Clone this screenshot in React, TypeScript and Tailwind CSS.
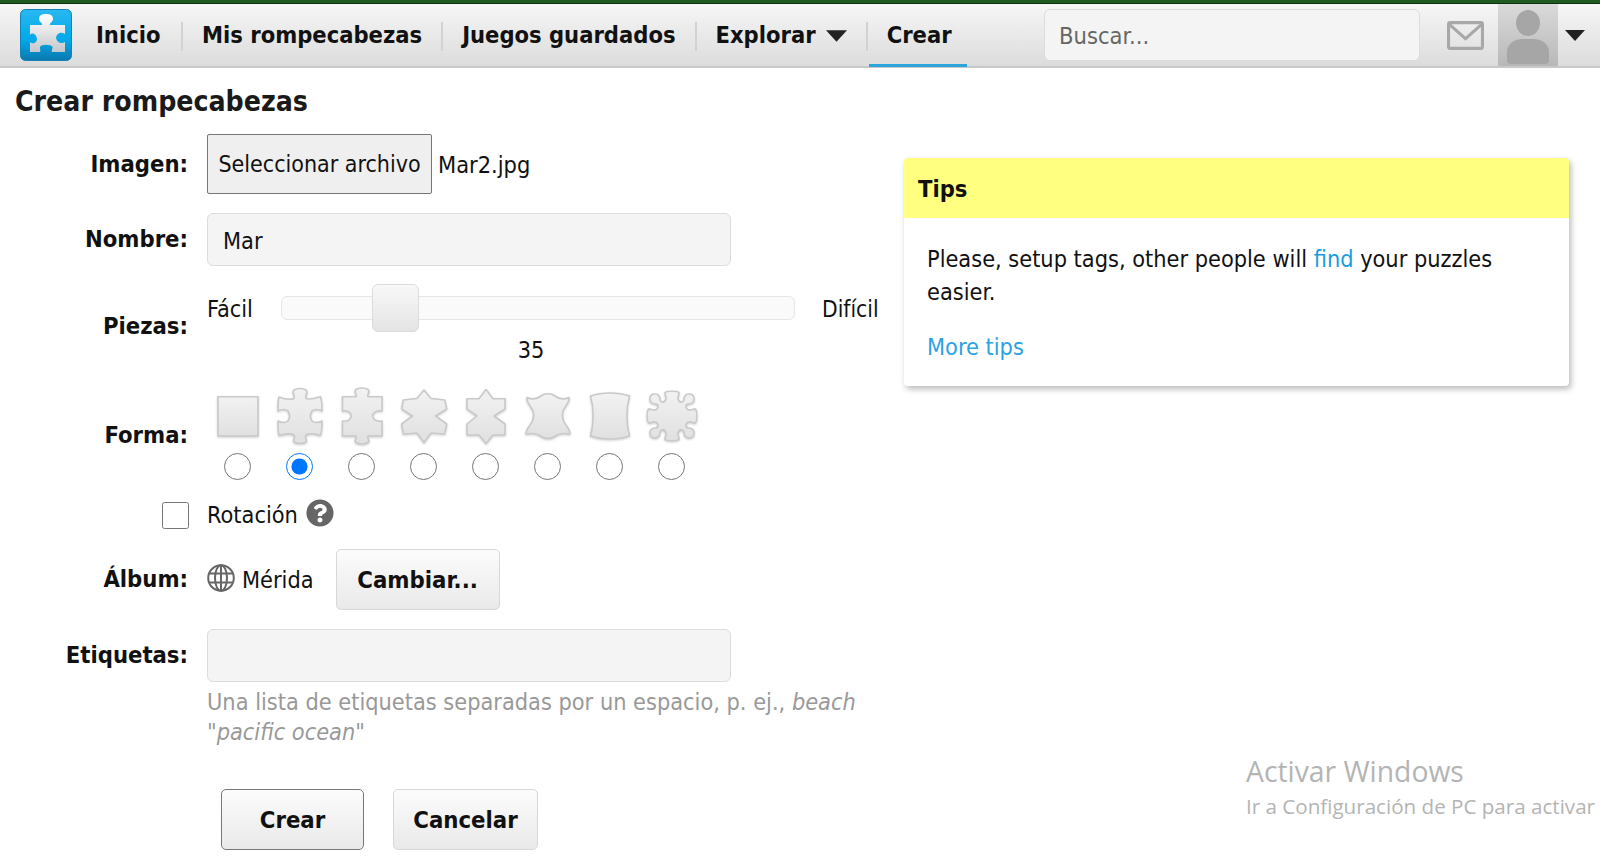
import React from "react";
import { FaQuestionCircle } from "react-icons/fa";

const rotate = (p: number[], turns: number) => {
  let [x, y] = p;
  for (let i = 0; i < turns; i++) [x, y] = [60 - y, x];
  return `${x} ${y}`;
};

// top edge of the gear piece, repeated for the four sides
const gearEdge = [
  [[17, 8], [18, 11], [18, 14]],
  [[19, 17], [23, 17], [24, 13]],
  [[25, 10], [21, 7], [24, 6]],
  [[27, 5], [33, 5], [36, 6]],
  [[39, 7], [35, 10], [36, 13]],
  [[37, 17], [41, 17], [42, 14]],
  [[42, 11], [43, 8], [47, 8]],
  [[50, 8], [52, 10], [52, 13]],
];

const gearPath = () => {
  let d = "M13 8";
  for (let t = 0; t < 4; t++) {
    gearEdge.forEach((c) => {
      d += ` C${c.map((p) => rotate(p, t)).join(" ")}`;
    });
  }
  return d + " Z";
};

const shapes = [
  "M10 10.7 H50 V50 H10 Z",
  "M9 11 C14 13 20 14 24 12.5 C26 10 21 7 24 4 C27 2 33 2 36 4 C39 7 34 10 36 12.5 C40 14 46 12 50.5 10.7 C52 15 52 20 52 25 C49 23 44 23 42 25 C40 28 40 32 42 35 C44 37 49 37 52 35 C52 40 52 45 50.5 49.5 C46 48 40 47 36 49 C34 52 38 54 36 56 C33 58 27 58 24 56 C22 54 26 52 24 49 C20 47 14 48 9 49.5 C8 46 8 40 8 35 C11 37 16 37 18 35 C20 32 20 28 18 25 C16 23 11 23 8 25 C8 20 8 15 9 11 Z",
  "M10.5 10.7 H24 C26 9 21 6 24 3.5 C27 1.5 33 1.5 36 3.5 C39 6 34 9 36 10.7 H50 V25 C46 24 41 26 40.5 30 C41 34 46 36 50 35 V50 H36 C34 52 39 54 36 56.5 C33 58.5 27 58.5 24 56.5 C21 54 26 52 24 50 H10.5 V35 C15 36 19 34 19.5 30 C19 26 15 24 10.5 25 Z",
  "M9.3 14 L23 12.5 L30 4 L37 12.5 L50.7 14 L52.7 23 L41.5 30 L52.7 38 L50.7 48 L37 47 L30 56.5 L23 47 L9.3 48 L7.7 38 L18.5 30 L7.7 23 Z",
  "M11 12.7 H23 L30 3.5 L37 12.7 H49 V23 L38 30 L49 38 V49 H37 L30 57.5 L23 49 H11 V38 L21 30 L11 23 Z",
  "M9 11.5 C14 14 19 13 23 10 C27 7 33 7 37 10 C41 13 46 14 51 11.5 C52 16 47 20 45 25 C44 29 44 32 46 36 C48 40 52 43 52 48 C47 47 41 47 36 51 C32 53 28 53 24 51 C19 47 13 47 8 48 C8 43 12 40 14 36 C16 32 16 28 15 25 C13 20 8 16 9 11.5 Z",
  "M10.5 10 C22 6 38 6 49.5 10 C46 22 46 38 49.5 50 C38 54 22 54 10.5 50 C14 38 14 22 10.5 10 Z",
  gearPath(),
];

const Label: React.FC<{ children: React.ReactNode }> = ({ children }) => (
  <div className="pt-[1px] text-right text-[23.6px] font-bold text-[#111]">{children}</div>
);

const fieldClass =
  "h-[53px] w-[524px] rounded-md border border-[#dcdcdc] bg-[#f4f4f4] px-[15px] pt-[2px] text-[23.3px] text-[#111] outline-none";

const btnClass =
  "rounded-[5px] border bg-gradient-to-b from-[#fcfcfc] to-[#e9e9e9] pt-[2px] text-[23.7px] font-bold text-[#111]";

const Caret: React.FC<{ className?: string }> = ({ className }) => (
  <svg viewBox="0 0 20 11" className={className}>
    <path d="M0 0 H20 L10 11 Z" fill="#222" />
  </svg>
);

const NavSep = () => <div className="mx-[19px] h-[29px] w-[2px] bg-[#d2d2d2]" />;

export default function App() {
  return (
    <div className="relative h-[861px] w-[1600px] overflow-hidden bg-white font-['DejaVu_Sans',sans-serif] font-stretch-condensed text-[#111]">
      <div className="h-[4px] border-b border-[#10300f] bg-[#1f5a20]" />

      {/* top bar */}
      <header className="flex h-[64px] items-center border-b-2 border-[#c8c8c8] bg-gradient-to-b from-[#f6f6f6] to-[#dcdcdc]">
        <svg viewBox="0 0 52 52" className="ml-[20px] mr-[24px] h-[52px] w-[52px] shrink-0">
          <defs>
            <linearGradient id="logoBg" x1="0" y1="0" x2="0" y2="1">
              <stop offset="0" stopColor="#2ab8f2" />
              <stop offset="0.6" stopColor="#00a9e8" />
              <stop offset="1" stopColor="#0b77ae" />
            </linearGradient>
            <linearGradient id="logoPiece" x1="0" y1="0" x2="0" y2="1">
              <stop offset="0" stopColor="#ffffff" />
              <stop offset="1" stopColor="#c4c8cc" />
            </linearGradient>
          </defs>
          <rect x="0.5" y="0.5" width="51" height="51" rx="5" fill="url(#logoBg)" stroke="#1282b8" />
          <path
            d="M10 16 H22 C23 14 19 13 19 10 C19 6 22 5 26 5 C30 5 33 6 33 10 C33 13 29 14 30 16 H45 V25 C42 23 37 23 36 29 C37 34 42 35 45 33 V43 H32 C31 41 33 40 32.5 38 C31 35 21 35 20 38 C19.5 40 21 41 20 43 H10 V33 C12 35 16.5 35 17 30 C16.5 25 12 23 10 26 Z"
            fill="url(#logoPiece)"
          />
        </svg>
        <nav className="mt-[2px] flex w-[860px] shrink-0 items-center whitespace-nowrap text-[23.5px] font-bold text-[#111]">
          <span className="w-[66px]">Inicio</span>
          <NavSep />
          <span>Mis rompecabezas</span>
          <NavSep />
          <span>Juegos guardados</span>
          <NavSep />
          <span>Explorar</span>
          <Caret className="ml-[10px] h-[12px] w-[21px] shrink-0" />
          <NavSep />
          <span className="relative">
            Crear
            <span className="absolute -bottom-[13px] -left-[18px] h-[3px] w-[98px] bg-[#2ba5dc]" />
          </span>
        </nav>
        <input
          placeholder="Buscar..."
          className="ml-[88px] h-[52px] w-[376px] shrink-0 rounded-md border border-[#dcdcdc] bg-[#f4f4f4] px-[14px] pt-[2px] text-[23.5px] outline-none placeholder:text-[#666]"
        />
        <svg viewBox="0 0 36 28" className="ml-[27px] h-[29px] w-[37px] shrink-0">
          <rect x="1.5" y="1.5" width="33" height="25" rx="1.5" fill="none" stroke="#a8a8a8" strokeWidth="3" />
          <path d="M2 3 L18 17 L34 3" fill="none" stroke="#a8a8a8" strokeWidth="3" />
        </svg>
        <div className="ml-[14px] flex h-full w-[60px] shrink-0 items-end justify-center bg-gradient-to-b from-[#dadada] to-[#b8b8b8]">
          <svg viewBox="0 0 60 62" className="h-[62px] w-[60px]">
            <ellipse cx="30" cy="19" rx="12" ry="13" fill="#a6a6a6" />
            <path d="M9 57 V49 C9 40 15 36 23 35 H37 C45 36 51 40 51 49 V57 Q51 60 47 60 H13 Q9 60 9 57 Z" fill="#a6a6a6" />
          </svg>
        </div>
        <Caret className="ml-[7px] h-[11px] w-[20px] shrink-0" />
      </header>

      <main className="flex">
        <section className="w-[904px] shrink-0">
          <h1 className="mb-[13px] ml-[15px] mt-[15px] text-[28.2px] font-bold leading-[38px] text-[#1a1a1a]">
            Crear rompecabezas
          </h1>

          <div className="grid grid-cols-[188px_1fr] gap-x-[19px]">
            <div className="flex h-[60px] items-center justify-end">
              <Label>Imagen:</Label>
            </div>
            <div className="flex h-[60px] items-center">
              <button className="h-[60px] w-[225px] rounded-[2px] border border-[#767676] bg-[#efefef] pt-[1px] text-[23px] text-[#111]">
                Seleccionar archivo
              </button>
              <span className="ml-[6px] pt-[3px] text-[23.4px]">Mar2.jpg</span>
            </div>

            <div className="mt-[19px] flex h-[53px] items-center justify-end">
              <Label>Nombre:</Label>
            </div>
            <div className="mt-[19px]">
              <input readOnly value="Mar" className={fieldClass} />
            </div>

            <div className="mt-[19px] flex h-[83px] items-center justify-end">
              <Label>Piezas:</Label>
            </div>
            <div className="mt-[19px] h-[83px] text-[23.3px]">
              <div className="flex h-[47px] items-center">
                <span className="w-[46px] pt-[2px]">Fácil</span>
                <div className="relative -mt-[2px] ml-[28px] h-[24px] w-[514px] rounded-md border border-[#e6e6e6] bg-[#fafafa]">
                  <div className="absolute -top-[13px] left-[90px] h-[48px] w-[47px] rounded-md border border-[#dcdcdc] bg-gradient-to-b from-[#f8f8f8] to-[#e4e4e4]" />
                </div>
                <span className="ml-[27px] pt-[2px] text-[22.6px]">Difícil</span>
              </div>
              <div className="mt-[1px] w-[648px] text-center">35</div>
            </div>

            <div className="mt-[17px] flex h-[100px] items-center justify-end">
              <Label>Forma:</Label>
            </div>
            <div className="mt-[17px] flex h-[100px] gap-[2px]">
              {shapes.map((d, i) => (
                <div key={i} className="flex w-[60px] flex-col items-center">
                  <svg viewBox="0 0 60 60" className="mt-[1px] h-[60px] w-[60px] translate-x-[1px] overflow-visible drop-shadow-[0_1px_1px_rgba(0,0,0,0.18)]">
                    <defs>
                      <linearGradient id={`shape${i}`} x1="0" y1="0" x2="0" y2="1">
                        <stop offset="0" stopColor="#f2f2f2" />
                        <stop offset="1" stopColor="#e0e0e0" />
                      </linearGradient>
                    </defs>
                    <path d={d} fill={`url(#shape${i})`} stroke="#c9c9c9" strokeWidth="1.6" strokeLinejoin="round" />
                  </svg>
                  <input
                    type="radio"
                    name="shape"
                    defaultChecked={i === 1}
                    className="m-0 mt-[7px] h-[27px] w-[27px]"
                  />
                </div>
              ))}
            </div>

            <div className="mt-[14px] flex h-[32px] items-center justify-end">
              <input type="checkbox" className="m-0 mr-[-1px] h-[27px] w-[27px]" />
            </div>
            <div className="mt-[14px] flex h-[32px] items-center text-[23.3px]">
              <span>Rotación</span>
              <FaQuestionCircle className="-mt-[4px] ml-[8px] text-[28px] text-[#666]" />
            </div>

            <div className="mt-[18px] flex h-[61px] items-center justify-end">
              <Label>Álbum:</Label>
            </div>
            <div className="mt-[18px] flex h-[61px] items-center text-[23.3px]">
              <svg viewBox="0 0 28 28" className="-mt-[4px] h-[28px] w-[28px] shrink-0" fill="none" stroke="#666" strokeWidth="2">
                <circle cx="14" cy="14" r="12.8" />
                <ellipse cx="14" cy="14" rx="6" ry="12.8" />
                <path d="M14 1 V27 M2.5 9.5 H25.5 M2.5 18.5 H25.5" />
              </svg>
              <span className="ml-[7px] pt-[2px]">Mérida</span>
              <button className={`${btnClass} ml-[22px] h-[61px] w-[164px] border-[#d8d8d8]`}>Cambiar...</button>
            </div>

            <div className="mt-[19px] flex h-[53px] items-center justify-end">
              <Label>Etiquetas:</Label>
            </div>
            <div className="mt-[19px]">
              <input readOnly className={fieldClass} />
              <p className="mt-[5px] w-[670px] text-[23.3px] leading-[30px] text-[#999]">
                Una lista de etiquetas separadas por un espacio, p. ej., <i>beach "pacific ocean"</i>
              </p>
            </div>
          </div>

          <div className="ml-[221px] mt-[42px] flex gap-[29px]">
            <button className={`${btnClass} h-[61px] w-[143px] border-[#777]`}>Crear</button>
            <button className={`${btnClass} h-[61px] w-[145px] border-[#d8d8d8]`}>Cancelar</button>
          </div>
        </section>

        {/* tips panel */}
        <aside className="mt-[90px] h-[228px] w-[665px] overflow-hidden rounded-[4px] bg-white shadow-[2px_3px_6px_rgba(0,0,0,0.28)]">
          <div className="flex h-[60px] items-center bg-[#ffff80] px-[14px] pt-[4px] text-[23.5px] font-bold">Tips</div>
          <div className="px-[23px] pt-[24px] text-[23.3px] leading-[33px]">
            <p>
              Please, setup tags, other people will <span className="text-[#1b9ce0]">find</span> your puzzles easier.
            </p>
            <p className="mt-[22px] text-[#29a3e3]">More tips</p>
          </div>
        </aside>
      </main>

      {/* windows watermark */}
      <div className="absolute left-[1246px] top-[750px] font-['Open_Sans',sans-serif] text-[#b4b4b4] [font-stretch:normal]">
        <div className="text-[28.3px] leading-[42px]">Activar Windows</div>
        <div className="whitespace-nowrap text-[20.6px] leading-[28px]">Ir a Configuración de PC para activar</div>
      </div>
    </div>
  );
}
